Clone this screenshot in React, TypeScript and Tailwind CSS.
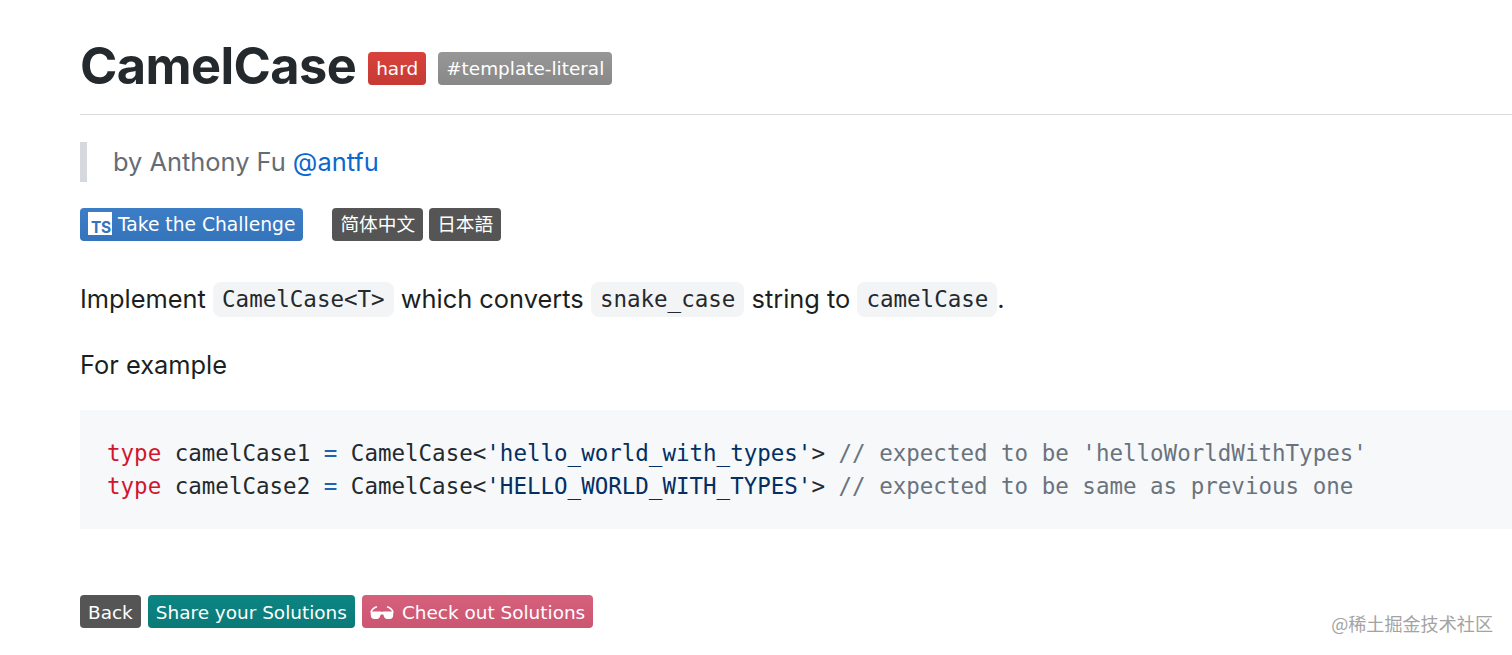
const sans = "font-['Inter','Liberation_Sans',sans-serif]";
const badgeBase =
  "inline-flex items-center h-[33px] px-2 pt-[2px] rounded-[4px] text-white font-['DejaVu_Sans','Noto_Sans_CJK_SC',sans-serif]";

function Code({ children }: { children: string }) {
  return (
    <code className="inline-block h-[35px] leading-[35px] px-[9px] rounded-[8px] bg-[#f3f4f5] text-[22.500px] text-[#24292e] font-['DejaVu_Sans_Mono',monospace] align-middle">
      {children}
    </code>
  );
}

function Glasses() {
  return (
    <svg width="24" height="13" viewBox="0 0 24 13" fill="#fff" className="mr-[8px]">
      <path d="M0.500 5.500 L11 5.500 C11.600 6.100 12.400 6.100 13 5.500 L23.500 5.500 L23 10.500 C22.700 12 21.500 13 20 13 L17 13 C15.500 13 14.400 12 14 10.500 L13.300 8.400 L10.700 8.400 L10 10.500 C9.600 12 8.500 13 7 13 L4 13 C2.500 13 1.300 12 1 10.500 Z" />
      <path d="M1 6 C2 3.500 4 1.500 7 0.800 M23 6 C22 3.500 20 1.500 17 0.800" fill="none" stroke="#fff" strokeWidth="1.500" />
    </svg>
  );
}

export default function App() {
  return (
    <div className={`relative h-[655px] w-full overflow-hidden bg-white pl-20 ${sans}`}>
      <div className="flex items-center h-[115px] border-b border-[#d8dbde] pt-[22px]">
        <h1 className="text-[50.500px] font-bold tracking-[-0.6px] text-[#24292e] leading-none mr-[12px] mb-[4px]">CamelCase</h1>
        <span className={`${badgeBase} text-[18.450px] bg-gradient-to-b from-[#d9423c] to-[#c63a34] mr-[12px]`}>hard</span>
        <span className={`${badgeBase} text-[18.450px] bg-gradient-to-b from-[#979797] to-[#888888]`}>#template-literal</span>
      </div>

      <div className="mt-[27px] border-l-[7px] border-[#d5d8dc] h-10 pl-[26px] flex items-center text-[25.400px] text-[#666c73]">
        <span>
          by Anthony Fu <span className="text-[#0a68d0]">@antfu</span>
        </span>
      </div>

      <div className="mt-[26px] flex items-center">
        <span className={`${badgeBase} text-[18.700px] bg-gradient-to-b from-[#3c7ec6] to-[#3574bb]`}>
          <span className="flex items-end justify-end w-6 h-[23px] mb-[4px] bg-white mr-[6px] pr-[1px] pb-[1px] shrink-0">
            <span className={`text-[15.500px] leading-[12px] font-bold tracking-[-0.2px] text-[#3574bb] ${sans}`}>TS</span>
          </span>
          Take the Challenge
        </span>
        <span className={`${badgeBase} text-[18.700px] bg-[#555555] ml-[29px]`}>简体中文</span>
        <span className={`${badgeBase} text-[18.700px] bg-[#555555] ml-[6px]`}>日本語</span>
      </div>

      <p className="mt-[38px] h-[40px] flex items-center text-[25.400px] text-[#1c1f22] whitespace-pre">
        <span>Implement </span>
        <Code>{"CamelCase<T>"}</Code>
        <span> which converts </span>
        <Code>snake_case</Code>
        <span> string to </span>
        <Code>camelCase</Code>
        <span>.</span>
      </p>

      <p className="mt-[26px] h-[40px] flex items-center text-[25.400px] text-[#1c1f22]">For example</p>

      <pre className="mt-[25px] h-[119px] bg-[#f6f8fa] pl-[27px] pt-[27px] text-[22.500px] leading-[33px] text-[#24292e] font-['DejaVu_Sans_Mono',monospace]">
        <span className="text-[#d0162e]">type</span> camelCase1 <span className="text-[#1f62ad]">=</span> CamelCase&lt;
        <span className="text-[#032f62]">'hello_world_with_types'</span>&gt;{" "}
        <span className="text-[#6a737d]">// expected to be 'helloWorldWithTypes'</span>
        {"\n"}
        <span className="text-[#d0162e]">type</span> camelCase2 <span className="text-[#1f62ad]">=</span> CamelCase&lt;
        <span className="text-[#032f62]">'HELLO_WORLD_WITH_TYPES'</span>&gt;{" "}
        <span className="text-[#6a737d]">// expected to be same as previous one</span>
      </pre>

      <div className="mt-[66px] flex items-center gap-[7px]">
        <span className={`${badgeBase} text-[18.450px] bg-[#555555]`}>Back</span>
        <span className={`${badgeBase} text-[18.450px] bg-gradient-to-b from-[#0c8583] to-[#0a7a78]`}>Share your Solutions</span>
        <span className={`${badgeBase} text-[18.450px] bg-gradient-to-b from-[#d6617c] to-[#cc5572]`}>
          <Glasses />
          Check out Solutions
        </span>
      </div>

      <span className="absolute right-[19px] top-[611px] text-[18.100px] leading-6 text-[#a3a3a3] font-['Noto_Sans_CJK_SC',sans-serif]">
        @稀土掘金技术社区
      </span>
    </div>
  );
}
